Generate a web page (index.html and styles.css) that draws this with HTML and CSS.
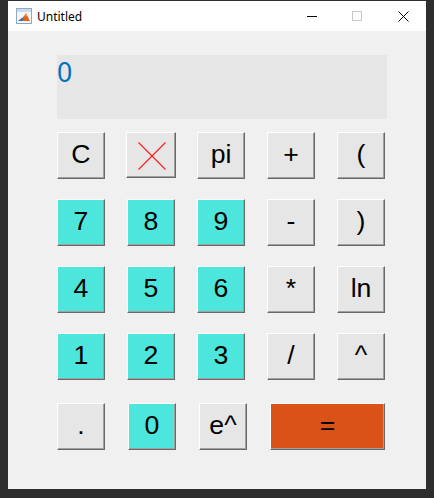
FILE: index.html
```html
<!DOCTYPE html>
<html>
<head>
<meta charset="utf-8">
<title>Untitled</title>
<link rel="stylesheet" href="styles.css">
</head>
<body>
<div class="window">
  <div class="titlebar">
    <svg class="app-icon" width="16" height="16" viewBox="0 0 16 16">
      <rect x="0.5" y="0.5" width="15" height="15" fill="#f4f8fc" stroke="#8ea9c4"/>
      <rect x="1" y="1" width="14" height="3" fill="#c9dcef"/>
      <polygon points="2,13 6,10 8,8 10,5 11,7 14,13" fill="#e0661c"/>
      <polygon points="2,13 6,10 8,11 6,13" fill="#2f74c0"/>
      <polygon points="9,7 10,5 11,7 10,9" fill="#f6b037"/>
    </svg>
    <span class="title">Untitled</span>
    <div class="caption">
      <div class="cap-btn"><span class="cap-min"></span></div>
      <div class="cap-btn"><span class="cap-max"></span></div>
      <div class="cap-btn">
        <svg width="11" height="11" viewBox="0 0 11 11"><path d="M0.5 0.5 L10.5 10.5 M10.5 0.5 L0.5 10.5" stroke="#000" stroke-width="1"/></svg>
      </div>
    </div>
  </div>
  <div class="content">
    <div class="display">0</div>
    <div class="keys">
      <button class="key">C</button>
      <button class="key key-x"><svg width="28" height="28" viewBox="0 0 28 28"><path d="M0.5 0.5 L27.5 27.5 M27.5 0.5 L0.5 27.5" stroke="#ff1a1a" stroke-width="1.1"/></svg></button>
      <button class="key">pi</button>
      <button class="key">+</button>
      <button class="key">(</button>

      <button class="key num">7</button>
      <button class="key num">8</button>
      <button class="key num">9</button>
      <button class="key">-</button>
      <button class="key">)</button>

      <button class="key num">4</button>
      <button class="key num">5</button>
      <button class="key num">6</button>
      <button class="key">*</button>
      <button class="key">ln</button>

      <button class="key num">1</button>
      <button class="key num">2</button>
      <button class="key num">3</button>
      <button class="key">/</button>
      <button class="key">^</button>

      <button class="key last">.</button>
      <button class="key num last nudge1">0</button>
      <button class="key last nudge2">e^</button>
      <button class="key last equals">=</button>
    </div>
  </div>
</div>
</body>
</html>
```
FILE: styles.css
```css
html, body {
  margin: 0;
  padding: 0;
}
body {
  background: #2e2e2e;
  width: 434px;
  height: 498px;
  overflow: hidden;
}
.window {
  margin: 1px 0 0 8px;
  width: 418px;
  height: 488px;
  background: #f0f0f0;
  display: flex;
  flex-direction: column;
}
.titlebar {
  height: 30px;
  background: #ffffff;
  display: flex;
  align-items: center;
  padding-left: 8px;
}
.app-icon {
  display: block;
}
.title {
  font-family: "Noto Sans", "Liberation Sans", sans-serif;
  font-size: 12px;
  color: #000;
  margin-left: 5px;
}
.caption {
  margin-left: auto;
  display: flex;
  height: 30px;
}
.cap-btn {
  width: 46px;
  height: 30px;
  display: flex;
  align-items: center;
  justify-content: center;
}
.cap-min {
  display: block;
  width: 10px;
  height: 1px;
  background: #000;
  margin-left: 1px;
}
.cap-max {
  display: block;
  width: 8px;
  height: 8px;
  border: 1px solid #c8c8c8;
}
.content {
  flex: 1;
  padding: 24px 0 0 49px;
  display: flex;
  flex-direction: column;
}
.display {
  width: 330px;
  height: 64px;
  background: #e6e6e6;
  color: #0072bd;
  font-family: "Noto Sans", "Liberation Sans", sans-serif;
  font-size: 26.67px;
  line-height: 1.25;
  box-sizing: border-box;
  padding-left: 0px;
}
.keys {
  margin-top: 13px;
  display: grid;
  grid-template-columns: repeat(5, 48px);
  grid-template-rows: repeat(4, 47px) 50px;
  column-gap: 22px;
  row-gap: 20px;
}
.key {
  box-sizing: border-box;
  width: 48px;
  height: 47px;
  margin: 0;
  padding: 0 0 3px 0;
  background: #e6e6e6;
  border-style: solid;
  border-width: 1px;
  border-color: #ffffff #696969 #696969 #ffffff;
  box-shadow: inset -1px -1px 0 #a0a0a0;
  font-family: "Liberation Sans", Arial, sans-serif;
  font-size: 26.67px;
  line-height: normal;
  color: #000;
  display: flex;
  align-items: center;
  justify-content: center;
}
.num {
  background: #4de6dc;
}
.key-x {
  width: 50px;
  height: 46px;
  margin-left: -1px;
  padding: 2px 0 0 1px;
}
.key-x svg {
  display: block;
}
.last {
  align-self: end;
}
.nudge1 {
  margin-left: 1px;
}
.nudge2 {
  margin-left: 2px;
}
.equals {
  grid-column: 4 / 6;
  width: 115px;
  margin-left: 3px;
  background: #d95319;
}
```
